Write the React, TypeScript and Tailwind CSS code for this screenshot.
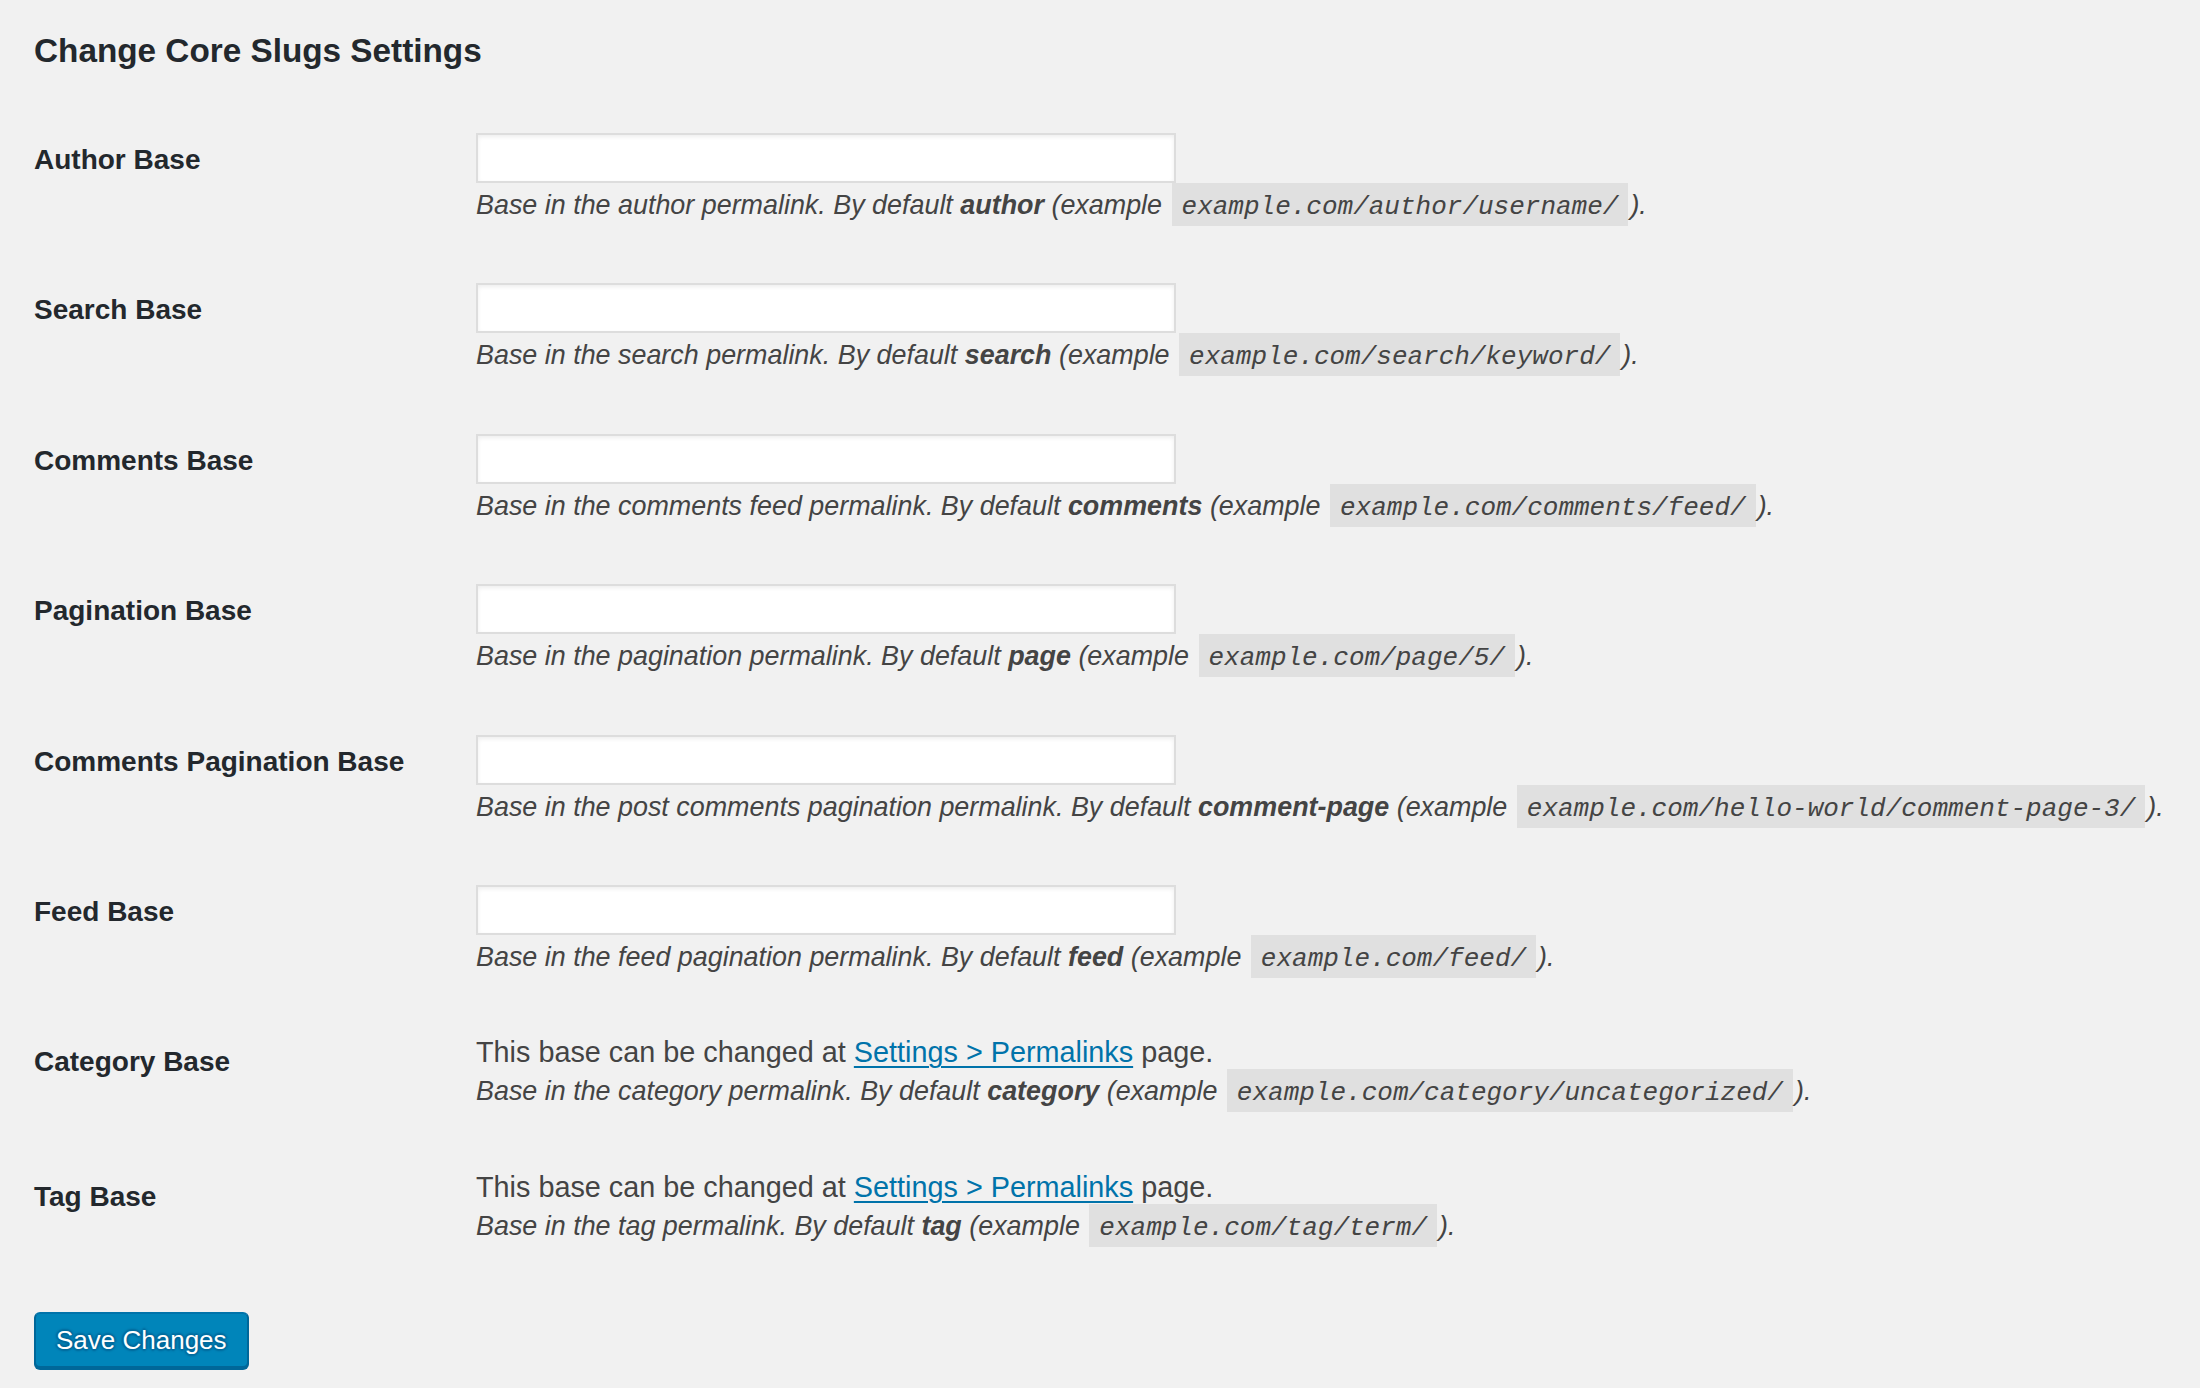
import React from 'react';

type Row = {
  label: string;
  text: string;
  slug: string;
  example: string;
  locked?: boolean;
};

const rows: Row[] = [
  { label: 'Author Base', text: 'Base in the author permalink. By default ', slug: 'author', example: 'example.com/author/username/' },
  { label: 'Search Base', text: 'Base in the search permalink. By default ', slug: 'search', example: 'example.com/search/keyword/' },
  { label: 'Comments Base', text: 'Base in the comments feed permalink. By default ', slug: 'comments', example: 'example.com/comments/feed/' },
  { label: 'Pagination Base', text: 'Base in the pagination permalink. By default ', slug: 'page', example: 'example.com/page/5/' },
  {
    label: 'Comments Pagination Base',
    text: 'Base in the post comments pagination permalink. By default ',
    slug: 'comment-page',
    example: 'example.com/hello-world/comment-page-3/',
  },
  { label: 'Feed Base', text: 'Base in the feed pagination permalink. By default ', slug: 'feed', example: 'example.com/feed/' },
  {
    label: 'Category Base',
    text: 'Base in the category permalink. By default ',
    slug: 'category',
    example: 'example.com/category/uncategorized/',
    locked: true,
  },
  { label: 'Tag Base', text: 'Base in the tag permalink. By default ', slug: 'tag', example: 'example.com/tag/term/', locked: true },
];

const Description = ({ row }: { row: Row }) => (
  <p className="mt-[4px] h-[36px] text-[26.9px] leading-[36px] italic text-[#444]">
    {row.text}
    <strong className="font-bold">{row.slug}</strong> (example{' '}
    <code className="mx-[2px] bg-[rgba(0,0,0,0.07)] px-[10px] pt-[9px] pb-[4px] font-['Liberation_Mono',monospace] text-[26px] leading-none italic">
      {row.example}
    </code>
    ).
  </p>
);

export default function App() {
  return (
    <div className="min-h-[1388px] w-full bg-[#f1f1f1] pl-[34px] pt-[31px] font-['Liberation_Sans',Arial,sans-serif] text-[#444]">
      <h2 className="text-[33.3px] leading-[40px] font-bold text-[#23282d]">Change Core Slugs Settings</h2>

      <div className="mt-[32px]">
        {rows.map((row) => (
          <div key={row.label} className="flex">
            <div className="w-[442px] shrink-0 pt-[40px] text-[28px] leading-[34px] font-bold text-[#23282d]">
              {row.label}
            </div>
            <div className="pt-[30px] pb-[30.4px]">
              {row.locked ? (
                <p className="h-[34px] text-[28.8px] leading-[34px] text-[#444]">
                  This base can be changed at{' '}
                  <a href="#" className="text-[#0073aa] underline decoration-[2px] underline-offset-[4px]">
                    Settings &gt; Permalinks
                  </a>{' '}
                  page.
                </p>
              ) : (
                <input
                  type="text"
                  className="block h-[50px] w-[700px] border-2 border-[#ddd] bg-white shadow-[inset_0_2px_4px_rgba(0,0,0,0.07)] outline-none"
                />
              )}
              <Description row={row} />
            </div>
          </div>
        ))}
      </div>

      <button className="mt-[38px] h-[56px] rounded-[6px] border-2 border-[#0073aa] border-b-[#006799] border-l-[#006799] border-r-[#006799] bg-[#0085ba] px-[20px] text-[26px] text-white shadow-[0_2px_0_#006799] [text-shadow:0_-2px_2px_#006799,2px_0_2px_#006799,0_2px_2px_#006799,-2px_0_2px_#006799]">
        Save Changes
      </button>
    </div>
  );
}
